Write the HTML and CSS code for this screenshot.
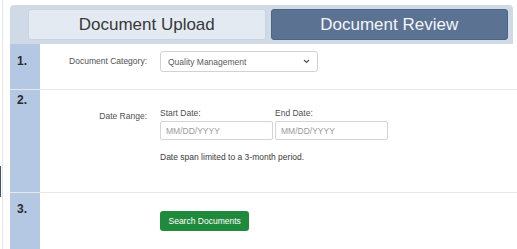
FILE: index.html
```html
<!DOCTYPE html>
<html lang="en">
<head>
    <meta charset="UTF-8">
    <meta name="viewport" content="width=device-width, initial-scale=1.0">
    <title>Document Review</title>
    <link rel="stylesheet" href="styles.css">
</head>
<body>
    <div class="page">
        <!-- Tabs -->
        <div class="tabs">
            <div class="tab">Document Upload</div>
            <div class="tab tab-active">Document Review</div>
        </div>

        <!-- Step 1 -->
        <div class="step step-one">
            <div class="step-num">1.</div>
            <div class="step-body">
                <label class="field-label" for="category">Document Category:</label>
                <div class="select-wrap">
                    <select id="category" class="select">
                        <option>Quality Management</option>
                    </select>
                    <svg class="chevron" width="7" height="5" viewBox="0 0 7 5">
                        <path d="M1 1 L3.5 3.5 L6 1" fill="none" stroke="#555" stroke-width="1.2"/>
                    </svg>
                </div>
            </div>
        </div>

        <!-- Step 2 -->
        <div class="step step-two">
            <div class="step-num">2.</div>
            <div class="step-body">
                <span class="field-label date-label">Date Range:</span>
                <div class="date-fields">
                    <div class="date-row">
                        <div class="date-col">
                            <label class="caption" for="startDate">Start Date:</label>
                            <input id="startDate" class="input" type="text" placeholder="MM/DD/YYYY">
                        </div>
                        <div class="date-col">
                            <label class="caption" for="endDate">End Date:</label>
                            <input id="endDate" class="input" type="text" placeholder="MM/DD/YYYY">
                        </div>
                    </div>
                    <p class="note">Date span limited to a 3-month period.</p>
                </div>
            </div>
        </div>

        <!-- Step 3 -->
        <div class="step step-three">
            <div class="step-num">3.</div>
            <div class="step-body">
                <span class="field-label"></span>
                <button class="btn-search">Search Documents</button>
            </div>
        </div>
    </div>
</body>
</html>
```

FILE: styles.css
```css
body {
    margin: 0;
    background-color: #fff;
    font-family: "Liberation Sans", Arial, sans-serif;
    color: #505050;
    overflow: hidden;
    position: relative;
}
body::before {
    content: "";
    position: absolute;
    left: 0;
    top: 166px;
    width: 1px;
    height: 31px;
    background-color: #3d5576;
}
.page {
    margin-left: 2px;
    border-left: 1px solid #e6e6e6;
    padding: 5px 0 0 7px;
    min-height: 244px;
}
.tabs {
    display: flex;
    gap: 5px;
    margin-right: 4px;
    padding: 4px 5px 4px 18px;
    background-color: #d0dae6;
    border-radius: 4px 4px 0 0;
}
.tab {
    flex: 1;
    height: 29px;
    line-height: 29px;
    text-align: center;
    font-size: 17px;
    color: #383838;
    background-color: #e4eaf2;
    border: 1px solid #c9d3df;
    border-radius: 3px;
}
.tab-active {
    background-color: #5b7292;
    border-color: #4d6383;
    color: #f3f5f8;
}
.step {
    display: grid;
    grid-template-columns: 30px 1fr;
}
.step + .step {
    border-top: 1px solid #e8e8e8;
}
.step-num {
    background-color: #b4c8e4;
    font-size: 12px;
    font-weight: bold;
    line-height: 14px;
    color: #2a2a2a;
    padding-left: 7px;
}
.step-body {
    display: flex;
    align-items: flex-start;
    font-size: 8.5px;
}
.field-label {
    width: 107px;
    margin-right: 13px;
    text-align: right;
    color: #505050;
    line-height: 11px;
}

/* step 1 */
.step-one .step-num {
    padding-top: 10px;
}
.step-one .step-body {
    align-items: center;
    padding: 7px 0 17px;
}
.select-wrap {
    position: relative;
}
.select {
    appearance: none;
    -webkit-appearance: none;
    width: 158px;
    height: 21px;
    padding: 0 0 0 7px;
    margin: 0;
    border: 1px solid #d2d2d2;
    border-radius: 3px;
    background-color: #fff;
    font-family: inherit;
    font-size: 8.5px;
    color: #5a5a5a;
}
.chevron {
    position: absolute;
    right: 8px;
    top: 8px;
}

/* step 2 */
.step-two .step-num {
    padding-top: 3px;
}
.step-two .step-body {
    padding: 18px 0 29px;
}
.date-label {
    margin-top: 3px;
}
.date-row {
    display: flex;
    gap: 2px;
}
.date-col {
    display: flex;
    flex-direction: column;
}
.caption {
    line-height: 11px;
    margin-bottom: 2px;
    color: #505050;
}
.input {
    width: 113px;
    height: 19px;
    box-sizing: border-box;
    margin: 0;
    padding: 0 0 0 5px;
    border: 1px solid #d4d4d4;
    border-radius: 2px;
    font-family: inherit;
    font-size: 8.5px;
    color: #444;
}
.input::placeholder {
    color: #9a9a9a;
}
.note {
    margin: 12px 0 0;
    line-height: 11px;
    color: #3a3a3a;
}

/* step 3 */
.step-three .step-num {
    padding-top: 9px;
}
.step-three .step-body {
    padding: 18px 0 30px;
}
.btn-search {
    height: 20px;
    padding: 0 8.5px;
    border: none;
    border-radius: 3px;
    background-color: #1f8a3b;
    color: #fff;
    font-family: inherit;
    font-size: 8.5px;
}
```
